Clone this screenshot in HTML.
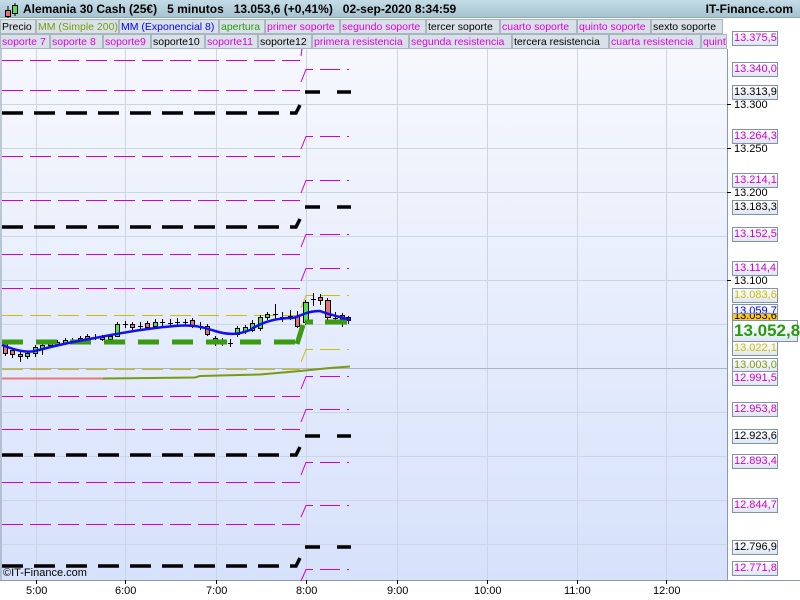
<!DOCTYPE html>
<html><head><meta charset="utf-8"><style>
*{margin:0;padding:0;box-sizing:border-box}
body{width:800px;height:600px;overflow:hidden;background:#fff;font-family:"Liberation Sans",sans-serif;position:relative}
#hdr{position:absolute;left:0;top:0;width:800px;height:18px;background:linear-gradient(#c4dce6,#a7c3d1);border-bottom:1px solid #8aa;font-weight:bold;font-size:12px;line-height:18px;color:#000}
.row{position:absolute;left:0;height:15px;display:flex;font-size:10.5px;line-height:14px;background:#fff}
.row span{display:block;height:15px;border:1px solid #a9b6c2;background:#d9e1e8;padding-left:1px;white-space:nowrap;overflow:hidden}
.lab{position:absolute;left:732px;width:46px;height:15px;border:1px solid #7f93a3;background:linear-gradient(#fff,#dfe6f2);font-size:11px;line-height:13px;padding-left:1px}
.pl{position:absolute;left:734px;font-size:11px;line-height:12px;color:#000}
.tk{position:absolute;font-size:11px;top:585px}
</style></head><body>
<div id="hdr">
<svg style="position:absolute;left:3px;top:2px" width="16" height="16"><line x1="5" y1="4" x2="5" y2="16" stroke="#000"/><rect x="2.5" y="8.5" width="5" height="6" fill="#e87070" stroke="#000"/><line x1="12" y1="1" x2="12" y2="14" stroke="#000"/><rect x="9.5" y="3.5" width="5" height="8" fill="#50e050" stroke="#000"/></svg>
<span style="position:absolute;left:23px">Alemania 30 Cash (25€)&nbsp;&nbsp;&nbsp;5 minutos&nbsp;&nbsp;&nbsp;13.053,6 (+0,41%)&nbsp;&nbsp;&nbsp;02-sep-2020 8:34:59</span>
<span style="position:absolute;right:7px">IT-Finance.com</span>
</div>
<div class="row" style="top:19px;width:723px">
<span style="width:36px">Precio</span><span style="width:83px;color:#7a9a10">MM (Simple 200)</span><span style="width:100px;color:#0000ff">MM (Exponencial 8)</span><span style="width:46px;color:#2a9a10">apertura</span><span style="width:75px;color:#e000e0">primer soporte</span><span style="width:86px;color:#e000e0">segundo soporte</span><span style="width:74px">tercer soporte</span><span style="width:77px;color:#e000e0">cuarto soporte</span><span style="width:74px;color:#e000e0">quinto soporte</span><span style="width:72px">sexto soporte</span>
</div>
<div class="row" style="top:34px;width:727px">
<span style="width:50px;color:#e000e0">soporte 7</span><span style="width:53px;color:#e000e0">soporte 8</span><span style="width:48px;color:#e000e0">soporte9</span><span style="width:54px">soporte10</span><span style="width:53px;color:#e000e0">soporte11</span><span style="width:54px">soporte12</span><span style="width:97px;color:#e000e0">primera resistencia</span><span style="width:103px;color:#e000e0">segunda resistencia</span><span style="width:97px">tercera resistencia</span><span style="width:92px;color:#e000e0">cuarta resistencia</span><span style="width:26px;color:#e000e0">quinta</span>
</div>
<svg style="position:absolute;left:0;top:0" width="800" height="600">
<defs><linearGradient id="bg" x1="0" y1="0" x2="0" y2="1"><stop offset="0" stop-color="#f6f8fd"/><stop offset="1" stop-color="#d6e1fb"/></linearGradient></defs>
<rect x="0" y="49" width="727" height="531" fill="url(#bg)"/>
<line x1="1" y1="49" x2="1" y2="580" stroke="#8a9aa8"/>
<line x1="727.5" y1="49" x2="727.5" y2="580" stroke="#8a9aa8"/>
<line x1="0" y1="580.5" x2="800" y2="580.5" stroke="#8a9aa8"/>
<g stroke="#ccd5e4" stroke-width="1">
<line x1="36.5" y1="49" x2="36.5" y2="580"/><line x1="125.5" y1="49" x2="125.5" y2="580"/><line x1="216.5" y1="49" x2="216.5" y2="580"/><line x1="306.5" y1="49" x2="306.5" y2="580"/><line x1="397.5" y1="49" x2="397.5" y2="580"/><line x1="487.5" y1="49" x2="487.5" y2="580"/><line x1="577.5" y1="49" x2="577.5" y2="580"/><line x1="666.5" y1="49" x2="666.5" y2="580"/>
<line x1="2" y1="104.5" x2="727" y2="104.5"/><line x1="2" y1="148.5" x2="727" y2="148.5"/><line x1="2" y1="192.5" x2="727" y2="192.5"/><line x1="2" y1="236.5" x2="727" y2="236.5"/><line x1="2" y1="280.5" x2="727" y2="280.5"/><line x1="2" y1="324.5" x2="727" y2="324.5"/><line x1="2" y1="412.5" x2="727" y2="412.5"/><line x1="2" y1="456.5" x2="727" y2="456.5"/><line x1="2" y1="500.5" x2="727" y2="500.5"/><line x1="2" y1="544.5" x2="727" y2="544.5"/>
</g>
<line x1="2" y1="368.5" x2="727" y2="368.5" stroke="#aab4c4"/>
<g stroke="#000"><line x1="36.5" y1="580" x2="36.5" y2="584"/><line x1="125.5" y1="580" x2="125.5" y2="584"/><line x1="216.5" y1="580" x2="216.5" y2="584"/><line x1="306.5" y1="580" x2="306.5" y2="584"/><line x1="397.5" y1="580" x2="397.5" y2="584"/><line x1="487.5" y1="580" x2="487.5" y2="584"/><line x1="577.5" y1="580" x2="577.5" y2="584"/><line x1="666.5" y1="580" x2="666.5" y2="584"/></g>
<g stroke="#d000d0" stroke-width="1" stroke-dasharray="21 7" fill="none">
<line x1="2" y1="60.5" x2="300" y2="60.5"/><line x1="2" y1="90.5" x2="300" y2="90.5"/><line x1="2" y1="156.5" x2="300" y2="156.5"/><line x1="2" y1="200.5" x2="300" y2="200.5"/><line x1="2" y1="254.5" x2="300" y2="254.5"/><line x1="2" y1="288.5" x2="300" y2="288.5"/><line x1="2" y1="396.5" x2="300" y2="396.5"/><line x1="2" y1="429.5" x2="300" y2="429.5"/><line x1="2" y1="482.5" x2="300" y2="482.5"/><line x1="2" y1="524.5" x2="300" y2="524.5"/>
</g>
<g stroke="#d000d0" stroke-width="1" fill="none">
<path d="M301 82 L306 69.5 H313 M320 69.5 H340 M347 69.5 H349"/>
<path d="M301 149 L306 136.5 H313 M320 136.5 H340 M347 136.5 H349"/>
<path d="M301 193 L306 180.5 H313 M320 180.5 H340 M347 180.5 H349"/>
<path d="M301 247 L306 234.5 H313 M320 234.5 H340 M347 234.5 H349"/>
<path d="M301 281 L306 268.5 H313 M320 268.5 H340 M347 268.5 H349"/>
<path d="M301 389 L306 376.5 H313 M320 376.5 H340 M347 376.5 H349"/>
<path d="M301 422 L306 409.5 H313 M320 409.5 H340 M347 409.5 H349"/>
<path d="M301 475 L306 462.5 H313 M320 462.5 H340 M347 462.5 H349"/>
<path d="M301 517 L306 505.5 H313 M320 505.5 H340 M347 505.5 H349"/>
<path d="M301 581 L306 569.5 H313 M320 569.5 H340 M347 569.5 H349"/>
<path d="M301 56 L302 49"/>
</g>
<g stroke="#c8c000" stroke-width="1" fill="none">
<line x1="2" y1="315.5" x2="300" y2="315.5" stroke-dasharray="21 7"/><line x1="2" y1="369.5" x2="300" y2="369.5" stroke-dasharray="21 7"/>
<path d="M301 308 L306 295.5 H313 M320 295.5 H340 M347 295.5 H349"/>
<path d="M301 362 L306 349.5 H313 M320 349.5 H340 M347 349.5 H349"/>
</g>
<g stroke="#000" stroke-width="3.5" fill="none">
<path d="M2 113 H296 L300 105" stroke-dasharray="21 11"/><path d="M305 92 H320 M337 92 H351"/>
<path d="M2 227 H296 L300 219" stroke-dasharray="21 11"/><path d="M305 207 H320 M337 207 H351"/>
<path d="M2 455 H296 L300 447" stroke-dasharray="21 11"/><path d="M305 436 H320 M337 436 H351"/>
<path d="M2 566 H296 L300 558" stroke-dasharray="21 11"/><path d="M305 547 H320 M337 547 H351"/>
</g>
<path d="M2 378.5 H103" stroke="#e87878" stroke-width="2" fill="none"/>
<path d="M103 378.5 L195 377.5 L200 376 L260 374.5 L300 371 L330 368 L350 366.5" stroke="#7a9a10" stroke-width="2" fill="none"/>
<g stroke="#000" stroke-width="1">
<line x1="5.5" y1="340" x2="5.5" y2="356"/><rect x="3.5" y="343.5" width="4" height="10" fill="#e87070"/>
<line x1="12.5" y1="348" x2="12.5" y2="358"/><rect x="10.5" y="350.5" width="4" height="4" fill="#e87070"/>
<line x1="20.5" y1="352" x2="20.5" y2="362"/><rect x="18.5" y="354.5" width="4" height="2" fill="#e87070"/>
<line x1="27.5" y1="351" x2="27.5" y2="359"/><rect x="25.5" y="353.5" width="4" height="3" fill="#50e050"/>
<line x1="35.5" y1="345" x2="35.5" y2="357"/><rect x="33.5" y="347.5" width="4" height="6" fill="#50e050"/>
<line x1="42.5" y1="342" x2="42.5" y2="355"/><rect x="40.5" y="345.5" width="4" height="3" fill="#50e050"/>
<line x1="50.5" y1="340" x2="50.5" y2="347"/><rect x="48.5" y="342.5" width="4" height="3" fill="#50e050"/>
<line x1="57.5" y1="340" x2="57.5" y2="346"/><rect x="55.5" y="342.5" width="4" height="2" fill="#e87070"/>
<line x1="65.5" y1="338" x2="65.5" y2="345"/><rect x="63.5" y="340.5" width="4" height="3" fill="#50e050"/>
<line x1="72.5" y1="338" x2="72.5" y2="344"/><line x1="70" y1="341.5" x2="75" y2="341.5"/>
<line x1="80.5" y1="336" x2="80.5" y2="344"/><rect x="78.5" y="338.5" width="4" height="4" fill="#50e050"/>
<line x1="87.5" y1="334" x2="87.5" y2="342"/><rect x="85.5" y="336.5" width="4" height="4" fill="#e87070"/>
<line x1="95.5" y1="334" x2="95.5" y2="340"/><line x1="93" y1="337.5" x2="98" y2="337.5"/>
<line x1="102.5" y1="335" x2="102.5" y2="341"/><rect x="100.5" y="337.5" width="4" height="2" fill="#e87070"/>
<line x1="110.5" y1="334" x2="110.5" y2="341"/><rect x="108.5" y="336.5" width="4" height="3" fill="#50e050"/>
<line x1="117.5" y1="322" x2="117.5" y2="337"/><rect x="115.5" y="324.5" width="4" height="12" fill="#50e050"/>
<line x1="125.5" y1="321" x2="125.5" y2="328"/><line x1="123" y1="324.5" x2="128" y2="324.5"/>
<line x1="132.5" y1="322" x2="132.5" y2="330"/><rect x="130.5" y="324.5" width="4" height="3" fill="#e87070"/>
<line x1="140.5" y1="322" x2="140.5" y2="330"/><line x1="138" y1="326.5" x2="143" y2="326.5"/>
<line x1="147.5" y1="321" x2="147.5" y2="330"/><rect x="145.5" y="323.5" width="4" height="4" fill="#e87070"/>
<line x1="155.5" y1="319" x2="155.5" y2="328"/><rect x="153.5" y="322.5" width="4" height="4" fill="#50e050"/>
<line x1="162.5" y1="319" x2="162.5" y2="326"/><line x1="160" y1="322.5" x2="165" y2="322.5"/>
<line x1="170.5" y1="319" x2="170.5" y2="327"/><line x1="168" y1="323.5" x2="173" y2="323.5"/>
<line x1="177.5" y1="318" x2="177.5" y2="326"/><line x1="175" y1="322.5" x2="180" y2="322.5"/>
<line x1="185.5" y1="319" x2="185.5" y2="326"/><line x1="183" y1="322.5" x2="188" y2="322.5"/>
<line x1="192.5" y1="318" x2="192.5" y2="328"/><rect x="190.5" y="320.5" width="4" height="5" fill="#e87070"/>
<line x1="200.5" y1="322" x2="200.5" y2="330"/><line x1="198" y1="326.5" x2="203" y2="326.5"/>
<line x1="207.5" y1="324" x2="207.5" y2="336"/><rect x="205.5" y="326.5" width="4" height="8" fill="#e87070"/>
<line x1="215.5" y1="336" x2="215.5" y2="346"/><rect x="213.5" y="338.5" width="4" height="5" fill="#e87070"/>
<line x1="222.5" y1="338" x2="222.5" y2="346"/><rect x="220.5" y="340.5" width="4" height="2" fill="#50e050"/>
<line x1="230.5" y1="339" x2="230.5" y2="347"/><line x1="228" y1="343.5" x2="233" y2="343.5"/>
<line x1="237.5" y1="326" x2="237.5" y2="337"/><rect x="235.5" y="328.5" width="4" height="6" fill="#50e050"/>
<line x1="245.5" y1="325" x2="245.5" y2="334"/><rect x="243.5" y="327.5" width="4" height="4" fill="#50e050"/>
<line x1="252.5" y1="320" x2="252.5" y2="332"/><rect x="250.5" y="323.5" width="4" height="7" fill="#50e050"/>
<line x1="260.5" y1="315" x2="260.5" y2="331"/><rect x="258.5" y="317.5" width="4" height="11" fill="#50e050"/>
<line x1="267.5" y1="312" x2="267.5" y2="320"/><rect x="265.5" y="314.5" width="4" height="3" fill="#50e050"/>
<line x1="275.5" y1="304" x2="275.5" y2="320"/><line x1="273" y1="314.5" x2="278" y2="314.5"/>
<line x1="282.5" y1="312" x2="282.5" y2="322"/><line x1="280" y1="317.5" x2="285" y2="317.5"/>
<line x1="290.5" y1="310" x2="290.5" y2="320"/><line x1="288" y1="316.5" x2="293" y2="316.5"/>
<line x1="297.5" y1="311" x2="297.5" y2="328"/><rect x="295.5" y="316.5" width="4" height="10" fill="#e87070"/>
<line x1="305.5" y1="300" x2="305.5" y2="325"/><rect x="303.5" y="302.5" width="5" height="20" fill="#50e050"/>
<line x1="313.5" y1="293" x2="313.5" y2="306"/><line x1="311" y1="299.5" x2="316" y2="299.5"/>
<line x1="320.5" y1="294" x2="320.5" y2="305"/><rect x="318.5" y="297.5" width="4" height="3" fill="#e87070"/>
<line x1="327.5" y1="298" x2="327.5" y2="320"/><rect x="325.5" y="300.5" width="5" height="17" fill="#e87070"/>
<line x1="335.5" y1="312" x2="335.5" y2="322"/><line x1="333" y1="318.5" x2="338" y2="318.5"/>
<line x1="342.5" y1="313" x2="342.5" y2="327"/><rect x="340.5" y="315.5" width="4" height="4" fill="#e87070"/>
<line x1="348.5" y1="316" x2="348.5" y2="324"/><rect x="346.5" y="317.5" width="4" height="3" fill="#e87070"/>
</g>
<g stroke="#3a9a10" stroke-width="5" fill="none">
<path d="M2 342 H296" stroke-dasharray="21 13"/>
<path d="M297 344 L303 325"/><path d="M305 322 H313 M325 322 H347"/>
</g>
<path d="M2 345 C15 350,25 353,35 351 C50 347,70 342,95 338 C120 333,150 328,175 326 C195 324,205 328,215 331 C228 335,238 335,250 330 C262 322,275 318,292 318 C300 317,305 311,320 311 C330 315,345 318,350 320" stroke="#1010f0" stroke-width="2.5" fill="none"/>
<g stroke="#000"><line x1="727" y1="104.5" x2="731" y2="104.5"/><line x1="727" y1="148.5" x2="731" y2="148.5"/><line x1="727" y1="192.5" x2="731" y2="192.5"/><line x1="727" y1="280.5" x2="731" y2="280.5"/></g>
</svg>
<div class="pl" style="top:99px">13.300</div>
<div class="pl" style="top:143px">13.250</div>
<div class="pl" style="top:187px">13.200</div>
<div class="pl" style="top:275px">13.100</div>
<div class="lab" style="top:31px;color:#d000d0">13.375,5</div>
<div class="lab" style="top:62px;color:#d000d0">13.340,0</div>
<div class="lab" style="top:85px">13.313,9</div>
<div class="lab" style="top:129px;color:#d000d0">13.264,3</div>
<div class="lab" style="top:173px;color:#d000d0">13.214,1</div>
<div class="lab" style="top:200px">13.183,3</div>
<div class="lab" style="top:227px;color:#d000d0">13.152,5</div>
<div class="lab" style="top:261px;color:#d000d0">13.114,4</div>
<div class="lab" style="top:288px;color:#c8c000">13.083,6</div>
<div class="lab" style="top:304px;color:#0000ff">13.059,7</div>
<div class="lab" style="top:313px;background:#ffc820;height:9px;overflow:hidden;line-height:5px">13.053,6</div>
<div class="lab" style="top:320px;left:732px;width:66px;height:22px;font-size:17px;line-height:20px;font-weight:bold;color:#2a9a10">13.052,8</div>
<div class="lab" style="top:341px;color:#c8c000">13.022,1</div>
<div class="lab" style="top:358px;color:#7a9a10">13.003,0</div>
<div class="lab" style="top:371px;color:#d000d0">12.991,5</div>
<div class="lab" style="top:402px;color:#d000d0">12.953,8</div>
<div class="lab" style="top:429px">12.923,6</div>
<div class="lab" style="top:454px;color:#d000d0">12.893,4</div>
<div class="lab" style="top:498px;color:#d000d0">12.844,7</div>
<div class="lab" style="top:540px">12.796,9</div>
<div class="lab" style="top:561px;color:#d000d0">12.771,8</div>
<div style="position:absolute;left:3px;top:567px;font-size:11px">©IT-Finance.com</div>
<div class="tk" style="left:26px">5:00</div><div class="tk" style="left:115px">6:00</div><div class="tk" style="left:206px">7:00</div><div class="tk" style="left:296px">8:00</div><div class="tk" style="left:387px">9:00</div><div class="tk" style="left:474px">10:00</div><div class="tk" style="left:564px">11:00</div><div class="tk" style="left:653px">12:00</div>
</body></html>
